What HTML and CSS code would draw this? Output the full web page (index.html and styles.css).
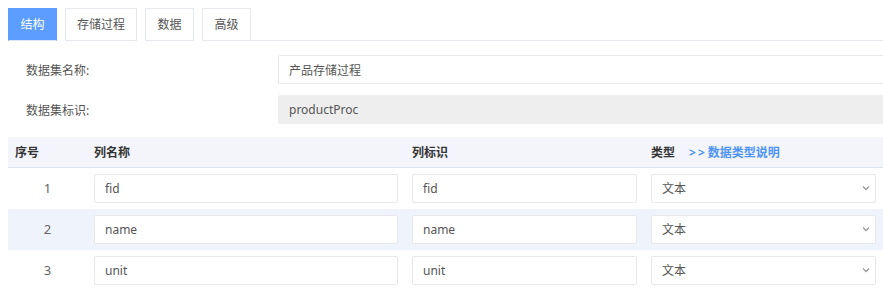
FILE: index.html
```html
<html>
<head>
  <title>数据集设置</title>
  <link rel="stylesheet" href="styles.css">
</head>
<body>
  <div class="tabs">
    <div class="tab active">结构</div>
    <div class="tab">存储过程</div>
    <div class="tab">数据</div>
    <div class="tab">高级</div>
    <div class="tab-rest"></div>
  </div>

  <div class="form">
    <label>数据集名称:</label>
    <input class="field" type="text" value="产品存储过程"/>
    <label>数据集标识:</label>
    <input class="field readonly" type="text" value="productProc" readonly/>
  </div>

  <table class="grid">
    <colgroup>
      <col class="c-no"/>
      <col class="c-name"/>
      <col class="c-id"/>
      <col class="c-type"/>
    </colgroup>
    <thead>
      <tr>
        <th>序号</th>
        <th>列名称</th>
        <th>列标识</th>
        <th>类型<a class="help" href="#"><span class="arrows">&gt;&gt;</span>数据类型说明</a></th>
      </tr>
    </thead>
    <tbody>
      <tr>
        <td class="no">1</td>
        <td><input class="cell" type="text" value="fid"/></td>
        <td><input class="cell" type="text" value="fid"/></td>
        <td><div class="select"><span>文本</span><svg width="10" height="10" viewBox="0 0 10 10"><path d="M2 3.5 L5 6.5 L8 3.5" fill="none" stroke="#999" stroke-width="1.3"/></svg></div></td>
      </tr>
      <tr class="alt">
        <td class="no">2</td>
        <td><input class="cell" type="text" value="name"/></td>
        <td><input class="cell" type="text" value="name"/></td>
        <td><div class="select"><span>文本</span><svg width="10" height="10" viewBox="0 0 10 10"><path d="M2 3.5 L5 6.5 L8 3.5" fill="none" stroke="#999" stroke-width="1.3"/></svg></div></td>
      </tr>
      <tr>
        <td class="no">3</td>
        <td><input class="cell" type="text" value="unit"/></td>
        <td><input class="cell" type="text" value="unit"/></td>
        <td><div class="select"><span>文本</span><svg width="10" height="10" viewBox="0 0 10 10"><path d="M2 3.5 L5 6.5 L8 3.5" fill="none" stroke="#999" stroke-width="1.3"/></svg></div></td>
      </tr>
    </tbody>
  </table>
</body>
</html>
```

FILE: styles.css
```css
body {
  margin: 0;
  padding: 0;
  background: #fff;
  font-family: "Noto Sans", "Noto Sans CJK SC", sans-serif;
  font-size: 12px;
  color: #555;
  overflow: hidden;
}

.tabs {
  display: flex;
  gap: 8px;
  padding: 8px 0 0 8px;
}
.tab {
  box-sizing: border-box;
  min-width: 49px;
  height: 33px;
  line-height: 31px;
  padding: 0 11px;
  text-align: center;
  border: 1px solid #e6e8ee;
  color: #555;
  background: #fff;
}
.tab.active {
  background: #5c9dff;
  border-color: #5c9dff;
  border-bottom-color: #dfe6f3;
  color: #fff;
}
.tab-rest {
  flex: 1;
  border-bottom: 1px solid #e6e8ee;
  margin-left: -8px;
}

.form {
  display: grid;
  grid-template-columns: 252px 1fr;
  row-gap: 11px;
  align-items: center;
  padding: 14px 0 0 26px;
}
.form label {
  color: #555;
}
.field {
  height: 29px;
  width: calc(100% + 20px);
  box-sizing: border-box;
  border: 1px solid #e8e8ec;
  border-radius: 2px;
  padding: 0 10px;
  font-family: inherit;
  font-size: 12px;
  color: #555;
  outline: none;
}
.field.readonly {
  background: #eeeeee;
  border-color: #eeeeee;
}

.grid {
  margin: 13px 0 0 8px;
  border-collapse: collapse;
  width: 875px;
  table-layout: fixed;
  font-size: 12px;
  color: #555;
}
.c-no { width: 79px; }
.c-name { width: 318px; }
.c-id { width: 239px; }
.c-type { width: 239px; }

.grid th {
  background: #f3f5fa;
  height: 30px;
  padding: 0 7px;
  text-align: left;
  font-weight: bold;
  color: #333;
  border-bottom: 1px solid #dde3ee;
}
.help {
  margin-left: 14px;
  color: #4d93f8;
  text-decoration: none;
}
.arrows {
  letter-spacing: 2px;
  margin-right: 1px;
}
.grid td {
  padding: 6px 7px;
  height: 29px;
}
.grid tr.alt td {
  background: #eff3fb;
}
.grid td.no {
  text-align: center;
  color: #666;
  font-size: 13px;
}
.cell {
  display: block;
  width: 100%;
  height: 29px;
  box-sizing: border-box;
  border: 1px solid #e8e8ec;
  border-radius: 2px;
  padding: 0 10px;
  font-family: inherit;
  font-size: 12px;
  color: #555;
  background: #fff;
  outline: none;
}
.select {
  display: flex;
  align-items: center;
  justify-content: space-between;
  height: 29px;
  box-sizing: border-box;
  border: 1px solid #e8e8ec;
  border-radius: 2px;
  padding: 0 4px 0 10px;
  background: #fff;
  color: #555;
}
```
